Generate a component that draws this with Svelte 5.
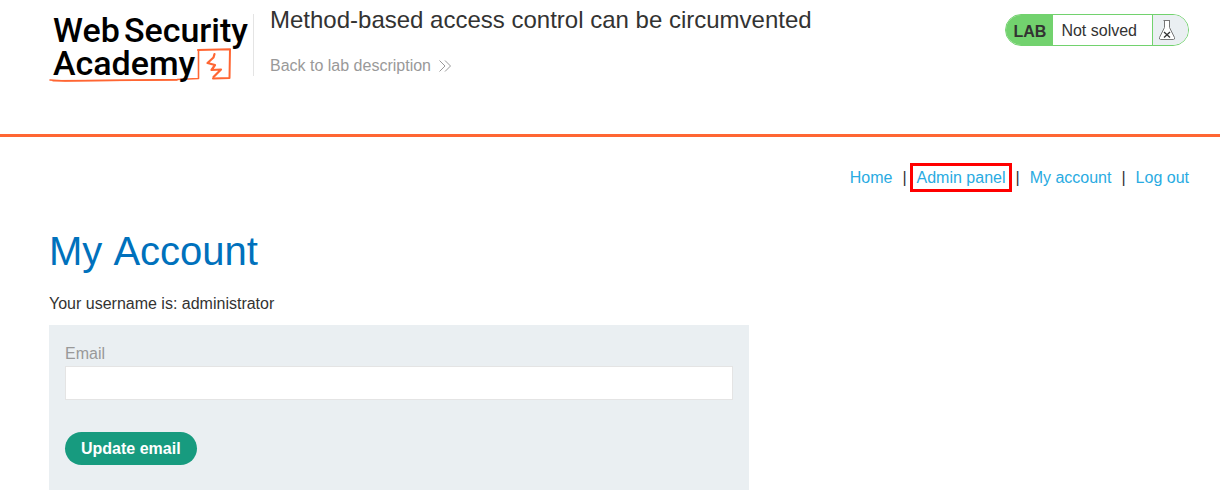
<script lang="ts">
  const links = [
    { label: 'Home', marked: false },
    { label: 'Admin panel', marked: true },
    { label: 'My account', marked: false },
    { label: 'Log out', marked: false }
  ];
  let email = $state('');
</script>

<div class="page">
  <header>
    <div class="lab-bar">
      <a class="logo" href="#academy" aria-label="Web Security Academy">
        <svg viewBox="0 0 204 74" width="204" height="74">
          <g fill="none" stroke="#ff6633" stroke-linejoin="round" stroke-linecap="round">
            <path d="M1 66L16 67L128 65.500L149.500 64.500L149.500 36" stroke-width="1.600" />
            <path d="M4 66.800L128 66" stroke-width="1.600" />
            <path d="M149 36L181 35.200L180.500 64L164 64.500" stroke-width="2" />
            <path d="M165.500 40L164.500 43.500L158.500 49L166 51L162.500 56L172 55.500L164.500 63" stroke-width="2.200" />
          </g>
          <g class="wordmark">
            <text x="4" y="28">Web</text>
            <text x="199" y="28" text-anchor="end">Security</text>
            <text x="4" y="61">Academy</text>
          </g>
        </svg>
      </a>
      <div class="title">
        <h2>Method-based access control can be circumvented</h2>
        <a class="back" href="#lab">
          Back to lab description
          <svg viewBox="0 0 12 12" width="12" height="12" fill="none" stroke="#999" stroke-width="1" aria-hidden="true">
            <path d="M0.500 0.500L6 6L0.500 11.500M6 0.500L11.500 6L6 11.500" />
          </svg>
        </a>
      </div>
      <div class="status">
        <strong>LAB</strong>
        <span class="state">Not solved</span>
        <span class="flask">
          <svg viewBox="0 0 18 20" width="18" height="20" aria-hidden="true">
            <path d="M5.500 .5H12M6.500 .5V7.500L1.500 17.500Q1 19.500 2.500 19.500H15.500Q17 19.500 16.500 17.500L11.500 7.500V.5" fill="#fff" stroke="#777" />
            <path d="M6 12L12 17.500M12 12L6 17.500" fill="none" stroke="#333" stroke-width="1.300" />
          </svg>
        </span>
      </div>
    </div>
  </header>

  <main>
    <nav>
      {#each links as link, i}
        {#if i > 0}<span>|</span>{/if}
        <a href="#nav" class:marked={link.marked}>{link.label}</a>
      {/each}
    </nav>
    <h1>My Account</h1>
    <p>Your username is: administrator</p>
    <form onsubmit={(e) => e.preventDefault()}>
      <label for="email">Email</label>
      <input id="email" type="email" bind:value={email} />
      <button type="submit">Update email</button>
    </form>
  </main>
</div>

<style>
  .page {
    font: 16px/24px "Liberation Sans", Arial, sans-serif;
    color: #333332;
    background: #fff;
  }
  .page * {
    box-sizing: border-box;
  }
  h1, h2, p {
    margin: 0;
    font-weight: 400;
  }
  a {
    color: #29abe2;
    text-decoration: none;
  }
  header {
    min-height: 137px;
    padding: 14px 31px 0 49px;
    border-bottom: 3px solid #ff6633;
  }
  .lab-bar {
    display: flex;
    align-items: flex-start;
  }
  .logo {
    height: 62px;
    border-right: 1px solid #e4e4e4;
  }
  .logo svg {
    display: block;
    overflow: visible;
  }
  .wordmark {
    font: 500 34px Roboto, sans-serif;
    fill: #000;
  }
  .title {
    flex: 1;
    padding-left: 16px;
    margin-top: -8px;
  }
  h2 {
    font-size: 24px;
    line-height: 28px;
  }
  .back {
    display: inline-flex;
    align-items: center;
    gap: 8px;
    margin-top: 20px;
    color: #999;
  }
  .status {
    display: flex;
    height: 32px;
    line-height: 32px;
    border: 1px solid #72d26e;
    border-radius: 16px;
    overflow: hidden;
  }
  .status strong {
    padding: 0 7px 0 8px;
    line-height: 33px;
    background: #72d26e;
  }
  .state {
    padding: 0 15px 0 8px;
    line-height: 31px;
    border-right: 1px solid #72d26e;
  }
  .flask {
    display: flex;
    align-items: center;
    width: 35px;
    padding-left: 5px;
    background: #eaeff2;
  }
  main {
    padding: 29px 31px 0 49px;
  }
  nav {
    display: flex;
    justify-content: flex-end;
    gap: 10px;
    line-height: 23px;
  }
  .marked {
    margin: 0 -4px;
    padding: 0 4px;
    outline: 3px solid #f00;
  }
  h1 {
    margin-top: 38px;
    font-size: 40px;
    line-height: 48px;
    font-kerning: none;
    color: #0071bc;
  }
  p {
    margin-top: 17px;
  }
  form {
    max-width: 700px;
    min-height: 174px;
    margin-top: 9px;
    padding: 17px 16px 16px;
    background: #eaeff2;
  }
  label {
    display: block;
    color: #999;
  }
  input {
    display: block;
    width: 100%;
    height: 34px;
    padding: 0 8px;
    font: inherit;
    border: 1px solid #e4e4e4;
    background: #fff;
  }
  button {
    display: block;
    height: 33px;
    margin-top: 32px;
    padding: 0 16px;
    font: inherit;
    font-weight: 700;
    color: #fff;
    background: #179b7f;
    border: 0;
    border-radius: 17px;
  }
  :global(body) {
    margin: 0;
  }
</style>
